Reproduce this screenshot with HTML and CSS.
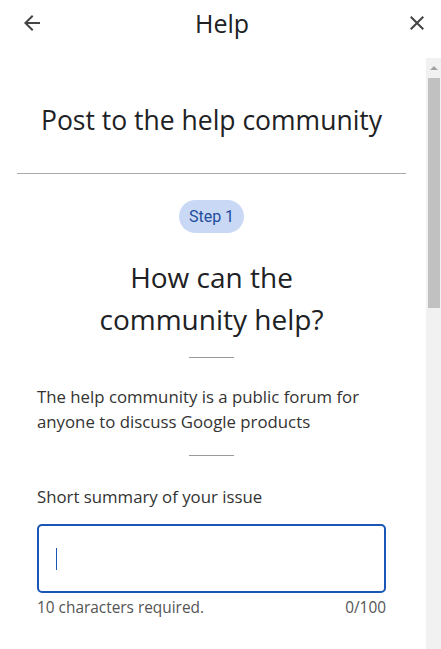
FILE: index.html
```html
<!DOCTYPE html>
<html lang="en">
<head>
    <meta charset="UTF-8">
    <meta name="viewport" content="width=device-width, initial-scale=1.0">
    <title>Help</title>
    <link rel="stylesheet" href="styles.css">
</head>
<body>
    <!-- Header -->
    <div class="header">
        <button class="icon-btn" aria-label="Back">
            <svg width="24" height="24" viewBox="0 0 24 24"><path d="M20 11H7.83l5.59-5.59L12 4l-8 8 8 8 1.41-1.41L7.83 13H20v-2z" fill="#444"/></svg>
        </button>
        <div class="header-title">Help</div>
        <button class="icon-btn" aria-label="Close">
            <svg width="24" height="24" viewBox="0 0 24 24"><path d="M19 6.41L17.59 5 12 10.59 6.41 5 5 6.41 10.59 12 5 17.59 6.41 19 12 13.41 17.59 19 19 17.59 13.41 12z" fill="#444"/></svg>
        </button>
    </div>

    <div class="pane">
        <div class="content">
            <h1 class="title">Post to the help community</h1>
            <hr class="divider">

            <div class="step"><span class="step-pill">Step 1</span></div>
            <h2 class="question">How can the<br>community help?</h2>
            <hr class="short-rule">
            <p class="intro">The help community is a public forum for anyone to discuss Google products</p>
            <hr class="short-rule">

            <label class="field-label" for="summary">Short summary of your issue</label>
            <div class="field">
                <span class="caret"></span>
            </div>
            <div class="field-help">
                <span>10 characters required.</span>
                <span>0/100</span>
            </div>
        </div>

        <!-- Scrollbar -->
        <div class="scrollbar">
            <div class="scroll-btn"><span class="scroll-arrow"></span></div>
            <div class="scroll-thumb"></div>
        </div>
    </div>
</body>
</html>
```

FILE: styles.css
```css
body {
    font-family: "Open Sans", Roboto, sans-serif;
    background-color: white;
    color: #202124;
    margin: 0;
    padding: 0;
    width: 441px;
    height: 649px;
    overflow: hidden;
}

.header {
    height: 58px;
    display: flex;
    align-items: center;
    justify-content: space-between;
    padding: 0 12px 12px 20px;
    box-sizing: border-box;
}

.icon-btn {
    width: 24px;
    height: 24px;
    border: none;
    background: none;
    padding: 0;
    display: flex;
}

.header-title {
    font-size: 25px;
    line-height: 30px;
    color: #202124;
    padding-right: 5px;
}

.pane {
    display: flex;
    height: 591px;
}

.content {
    flex: 1;
    padding: 0 40px 0 37px;
}

.title {
    font-weight: 400;
    font-size: 26.5px;
    text-align: center;
    margin: 46px 0 0;
    line-height: 32px;
}

.divider {
    border: none;
    border-top: 1px solid #aaa;
    margin: 37px -20px 0;
}

.step {
    text-align: center;
    margin-top: 26px;
}

.step-pill {
    display: inline-block;
    background-color: #c9d9f5;
    color: #1f4c9c;
    font-family: Roboto, sans-serif;
    font-size: 16px;
    line-height: 33px;
    padding: 0 10px;
    border-radius: 17px;
}

.question {
    font-weight: 400;
    font-size: 28px;
    line-height: 42px;
    text-align: center;
    margin: 23px 0 0;
}

.short-rule {
    width: 45px;
    border: none;
    border-top: 1px solid #999;
    margin: 17px auto 0;
}

.intro {
    font-size: 16.8px;
    line-height: 25px;
    color: #333;
    margin: 26px 0 21px;
}

.field-label {
    display: block;
    font-size: 16.8px;
    line-height: 22px;
    color: #333;
    margin-top: 30px;
}

.field {
    height: 69px;
    margin-top: 16px;
    border: 2px solid #1a56b6;
    border-radius: 5px;
    box-sizing: border-box;
    display: flex;
    align-items: center;
    padding-left: 17px;
}

.caret {
    width: 1px;
    height: 22px;
    background-color: #1a56b6;
}

.field-help {
    display: flex;
    justify-content: space-between;
    font-size: 15.4px;
    line-height: 20px;
    color: #555;
    margin-top: 5px;
}

.scrollbar {
    width: 15px;
    background-color: #f1f1f1;
}

.scroll-btn {
    height: 20px;
    display: flex;
    justify-content: center;
    align-items: center;
}

.scroll-arrow {
    width: 0;
    height: 0;
    border-left: 4px solid transparent;
    border-right: 4px solid transparent;
    border-bottom: 4px solid #a3a3a3;
}

.scroll-thumb {
    height: 230px;
    margin: 0 1px 0 2px;
    background-color: #c1c1c1;
}
```
